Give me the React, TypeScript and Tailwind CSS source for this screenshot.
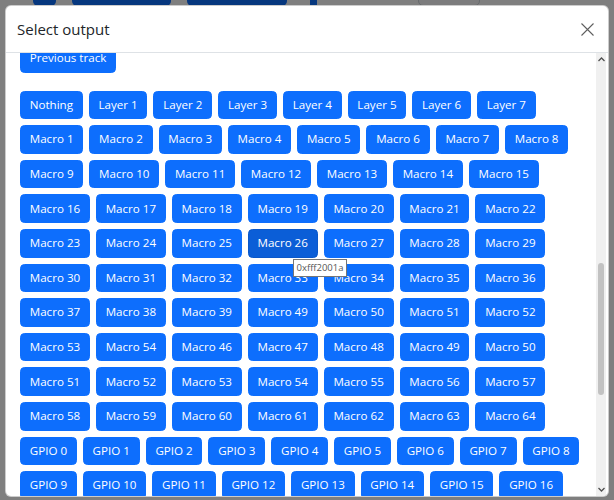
import React from "react";

const rows: string[][] = [
  ["Nothing", "Layer 1", "Layer 2", "Layer 3", "Layer 4", "Layer 5", "Layer 6", "Layer 7"],
  ["Macro 1", "Macro 2", "Macro 3", "Macro 4", "Macro 5", "Macro 6", "Macro 7", "Macro 8"],
  ["Macro 9", "Macro 10", "Macro 11", "Macro 12", "Macro 13", "Macro 14", "Macro 15"],
  ["Macro 16", "Macro 17", "Macro 18", "Macro 19", "Macro 20", "Macro 21", "Macro 22"],
  ["Macro 23", "Macro 24", "Macro 25", "Macro 26", "Macro 27", "Macro 28", "Macro 29"],
  ["Macro 30", "Macro 31", "Macro 32", "Macro 33", "Macro 34", "Macro 35", "Macro 36"],
  ["Macro 37", "Macro 38", "Macro 39", "Macro 49", "Macro 50", "Macro 51", "Macro 52"],
  ["Macro 53", "Macro 54", "Macro 46", "Macro 47", "Macro 48", "Macro 49", "Macro 50"],
  ["Macro 51", "Macro 52", "Macro 53", "Macro 54", "Macro 55", "Macro 56", "Macro 57"],
  ["Macro 58", "Macro 59", "Macro 60", "Macro 61", "Macro 62", "Macro 63", "Macro 64"],
  ["GPIO 0", "GPIO 1", "GPIO 2", "GPIO 3", "GPIO 4", "GPIO 5", "GPIO 6", "GPIO 7", "GPIO 8"],
  ["GPIO 9", "GPIO 10", "GPIO 11", "GPIO 12", "GPIO 13", "GPIO 14", "GPIO 15", "GPIO 16"],
];

function Btn({ label, hover }: { label: string; hover?: boolean }) {
  return (
    <button
      className={
        hover
          ? "m-[3px] shrink-0 rounded-[4.5px] border border-[#0a58ca] bg-[#0b5ed7] px-[8.75px] py-[4.3px] text-[11.6px] leading-[18px] text-white whitespace-nowrap"
          : "m-[3px] shrink-0 rounded-[4.5px] border border-[#0d6efd] bg-[#0d6efd] px-[8.75px] py-[4.3px] text-[11.6px] leading-[18px] text-white whitespace-nowrap"
      }
    >
      {label}
    </button>
  );
}

export default function App() {
  return (
    <div className="relative h-[500px] w-[614px] overflow-hidden bg-white font-['Open_Sans',sans-serif]">
      {/* page behind */}
      <div className="flex items-start pl-[33px] -mt-[24px]">
        <div className="h-[30px] w-[23px] rounded-[5px] bg-[#0d6efd]" />
        <div className="ml-[16px] h-[30px] w-[99px] rounded-[5px] bg-[#0d6efd]" />
        <div className="ml-[16px] h-[30px] w-[100px] rounded-[5px] bg-[#0d6efd]" />
        <div className="ml-[23px] mt-[22px] h-[10px] w-[7px] rounded-[2px] bg-[#0d6efd]" />
        <div className="ml-[101px] h-[30px] w-[62px] rounded-[5px] border border-[#ced4da] bg-[#f8f9fa]" />
      </div>
      {/* backdrop */}
      <div className="absolute inset-0 bg-black/50" />

      {/* modal */}
      <div className="absolute left-[5px] top-[5px] flex h-[492px] w-[604px] flex-col overflow-hidden rounded-[6px] border border-black/20 bg-white">
        <div className="flex h-[47px] shrink-0 items-center justify-between border-b border-[#dee2e6] pl-[11px] pr-[14px]">
          <h5 className="text-[15px] font-medium leading-[22px] text-[#212529]">Select output</h5>
          <svg width="13" height="13" viewBox="0 0 13 13" className="mt-[1px]">
            <path d="M0.5 0.5 L12.5 12.5 M12.5 0.5 L0.5 12.5" stroke="#5f5f5f" strokeWidth="1.1" />
          </svg>
        </div>
        <div className="flex min-h-0 flex-1">
          <div className="min-w-0 flex-1 overflow-hidden px-[11px]">
            <div className="-mt-[12px]">
              <div className="mb-[12px] flex">
                <Btn label="Previous track" />
              </div>
              {rows.map((r, i) => (
                <div key={i} className="flex">
                  {r.map((l, j) => (
                    <Btn key={j} label={l} hover={l === "Macro 26"} />
                  ))}
                </div>
              ))}
            </div>
          </div>
          <div className="mr-[2px] flex w-[10px] shrink-0 flex-col items-center bg-[#f0f0f0]">
            <svg width="7" height="5" viewBox="0 0 7 5" className="mt-[4px]">
              <path d="M0.5 4 L3.5 1 L6.5 4" stroke="#505050" strokeWidth="1.3" fill="none" />
            </svg>
            <div className="mt-[201px] h-[132px] w-[6px] rounded-[3px] bg-[#c2c2c2]" />
            <div className="flex-1" />
            <svg width="7" height="5" viewBox="0 0 7 5" className="mb-[4px]">
              <path d="M0.5 1 L3.5 4 L6.5 1" stroke="#505050" strokeWidth="1.3" fill="none" />
            </svg>
          </div>
        </div>
      </div>

      {/* native tooltip */}
      <div className="absolute left-[293px] top-[259px] flex h-[18px] w-[54px] items-center justify-center border border-[#767676] bg-white text-[9.5px] text-[#575757] font-['Open_Sans',sans-serif]">
        0xfff2001a
      </div>
    </div>
  );
}
